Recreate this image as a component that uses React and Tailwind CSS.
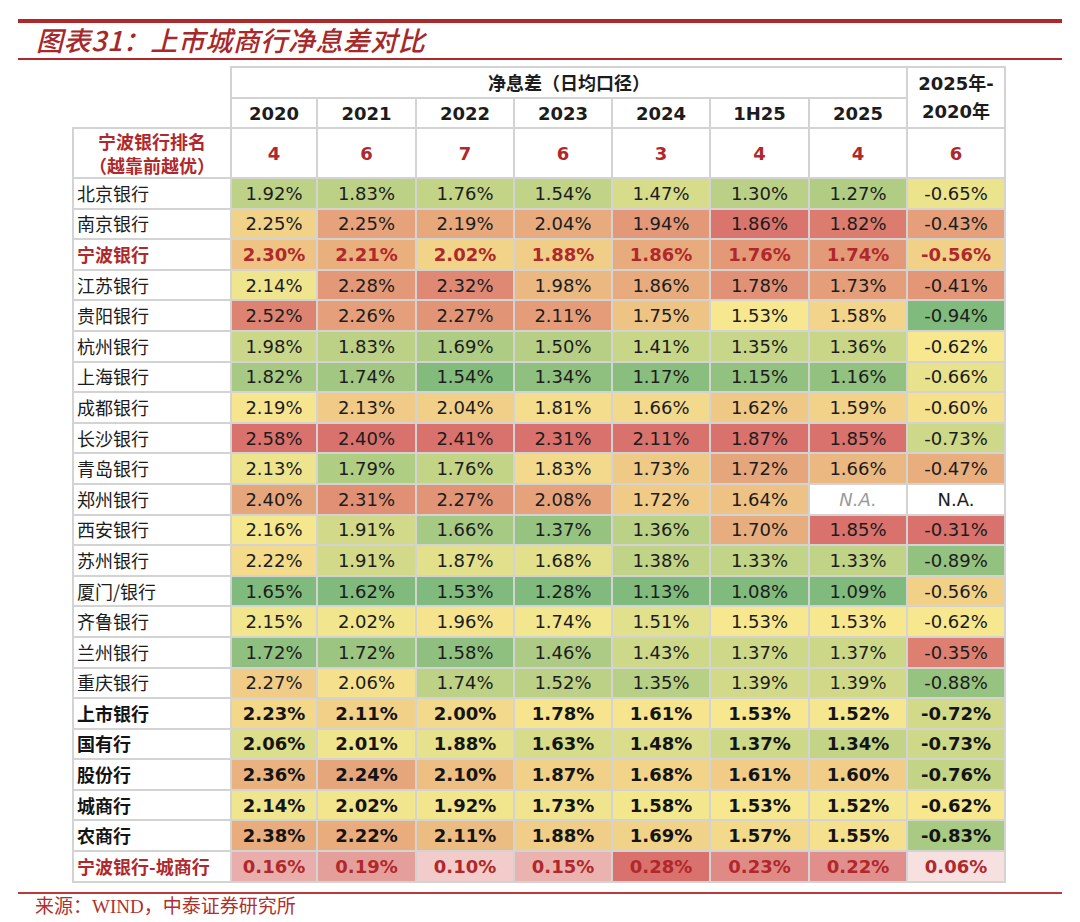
import React from "react";

const G = [128, 186, 125];
const Y = [247, 232, 143];
const R = [217, 113, 108];

const banks = [
  ["北京银行", [1.92, 1.83, 1.76, 1.54, 1.47, 1.3, 1.27, -0.65]],
  ["南京银行", [2.25, 2.25, 2.19, 2.04, 1.94, 1.86, 1.82, -0.43]],
  ["宁波银行", [2.3, 2.21, 2.02, 1.88, 1.86, 1.76, 1.74, -0.56], "nb"],
  ["江苏银行", [2.14, 2.28, 2.32, 1.98, 1.86, 1.78, 1.73, -0.41]],
  ["贵阳银行", [2.52, 2.26, 2.27, 2.11, 1.75, 1.53, 1.58, -0.94]],
  ["杭州银行", [1.98, 1.83, 1.69, 1.5, 1.41, 1.35, 1.36, -0.62]],
  ["上海银行", [1.82, 1.74, 1.54, 1.34, 1.17, 1.15, 1.16, -0.66]],
  ["成都银行", [2.19, 2.13, 2.04, 1.81, 1.66, 1.62, 1.59, -0.6]],
  ["长沙银行", [2.58, 2.4, 2.41, 2.31, 2.11, 1.87, 1.85, -0.73]],
  ["青岛银行", [2.13, 1.79, 1.76, 1.83, 1.73, 1.72, 1.66, -0.47]],
  ["郑州银行", [2.4, 2.31, 2.27, 2.08, 1.72, 1.64, null, null]],
  ["西安银行", [2.16, 1.91, 1.66, 1.37, 1.36, 1.7, 1.85, -0.31]],
  ["苏州银行", [2.22, 1.91, 1.87, 1.68, 1.38, 1.33, 1.33, -0.89]],
  ["厦门/银行", [1.65, 1.62, 1.53, 1.28, 1.13, 1.08, 1.09, -0.56]],
  ["齐鲁银行", [2.15, 2.02, 1.96, 1.74, 1.51, 1.53, 1.53, -0.62]],
  ["兰州银行", [1.72, 1.72, 1.58, 1.46, 1.43, 1.37, 1.37, -0.35]],
  ["重庆银行", [2.27, 2.06, 1.74, 1.52, 1.35, 1.39, 1.39, -0.88]],
  ["上市银行", [2.23, 2.11, 2.0, 1.78, 1.61, 1.53, 1.52, -0.72], "agg"],
  ["国有行", [2.06, 2.01, 1.88, 1.63, 1.48, 1.37, 1.34, -0.73], "agg"],
  ["股份行", [2.36, 2.24, 2.1, 1.87, 1.68, 1.61, 1.6, -0.76], "agg"],
  ["城商行", [2.14, 2.02, 1.92, 1.73, 1.58, 1.53, 1.52, -0.62], "agg"],
  ["农商行", [2.38, 2.22, 2.11, 1.88, 1.69, 1.57, 1.55, -0.83], "agg"],
];

const diffRow = [0.16, 0.19, 0.1, 0.15, 0.28, 0.23, 0.22, 0.06];
const years = ["2020", "2021", "2022", "2023", "2024", "1H25", "2025"];
const ranks = [4, 6, 7, 6, 3, 4, 4, 6];

function median(arr) {
  const s = [...arr].sort((a, b) => a - b);
  const n = s.length;
  return n % 2 ? s[(n - 1) / 2] : (s[n / 2 - 1] + s[n / 2]) / 2;
}

const mix = (a, b, t) =>
  `rgb(${a.map((v, i) => Math.round(v + (b[i] - v) * t)).join(",")})`;

const stats = Array.from({ length: 8 }, (_, c) => {
  const vals = banks.map((b) => b[1][c]).filter((v) => v !== null);
  return { min: Math.min(...vals), max: Math.max(...vals), mid: median(vals) };
});

function colorFor(v, c) {
  if (v === null) return "#ffffff";
  const { min, max, mid } = stats[c];
  if (v >= mid) return mix(Y, R, max === mid ? 0 : (v - mid) / (max - mid));
  return mix(Y, G, mid === min ? 0 : (mid - v) / (mid - min));
}

const diffColor = (v) => mix([255, 255, 255], R, v / 0.28);

const fmt = (v) => `${v.toFixed(2)}%`;

const bd = "border-2 border-[#d3d3d3]";

export default function App() {
  return (
    <div className="w-[1080px] h-[922px] bg-white overflow-hidden font-['DejaVu_Sans','Noto_Sans_CJK_SC',sans-serif]">
      <div className="pt-[19px] px-[18px]">
        <div className="h-[4px] bg-[#b0272a]" />
        <div className="h-[35px] pl-[18px] flex items-center text-[27px] italic font-medium text-[#a8282a] font-['Noto_Sans_CJK_SC',sans-serif] tracking-[0.5px]">
          图表31：上市城商行净息差对比
        </div>
        <div className="h-[2px] bg-[#b0272a]" />
      </div>

      <div className="pl-[72px] pt-[6px]">
        <table className="border-collapse table-fixed w-[932px] text-[18px] text-[#1c1c1c]">
          <colgroup>
            <col className="w-[158px]" />
            <col className="w-[86px]" />
            <col className="w-[99px]" />
            <col className="w-[98px]" />
            <col className="w-[98px]" />
            <col className="w-[98px]" />
            <col className="w-[99px]" />
            <col className="w-[98px]" />
            <col className="w-[98px]" />
          </colgroup>
          <thead>
            <tr className="h-[31px]">
              <th rowSpan={2} className="border-0 p-0" />
              <th colSpan={7} className={`${bd} p-0 font-bold text-center font-['Noto_Sans_CJK_SC',sans-serif]`}>
                净息差（日均口径）
              </th>
              <th rowSpan={2} className={`${bd} p-0 font-bold text-center leading-[28px]`}>
                2025年-
                <br />
                2020年
              </th>
            </tr>
            <tr className="h-[30px]">
              {years.map((y) => (
                <th key={y} className={`${bd} p-0 font-bold text-center`}>
                  {y}
                </th>
              ))}
            </tr>
          </thead>
          <tbody>
            <tr className="h-[48.5px]">
              <td className={`${bd} p-0 text-center font-bold text-[#b0282b] leading-[24px] font-['Noto_Sans_CJK_SC',sans-serif]`}>
                宁波银行排名
                <br />
                （越靠前越优）
              </td>
              {ranks.map((r, i) => (
                <td key={i} className={`${bd} p-0 text-center font-bold text-[#b0282b]`}>
                  {r}
                </td>
              ))}
            </tr>
            {banks.map(([name, vals, kind]) => {
              const isNb = kind === "nb";
              const isAgg = kind === "agg";
              const textCls = isNb
                ? "font-bold text-[#b0282b]"
                : isAgg
                ? "font-bold text-[#141414]"
                : "";
              return (
                <tr key={name} className="h-[30.6px]">
                  <td className={`${bd} p-0 pl-[3px] text-left font-['Noto_Sans_CJK_SC',sans-serif] ${textCls}`}>
                    {name}
                  </td>
                  {vals.map((v, c) => (
                    <td
                      key={c}
                      className={`${bd} p-0 text-center ${textCls}`}
                      style={{ backgroundColor: colorFor(v, c) }}
                    >
                      {v === null ? (
                        c === 6 ? (
                          <span className="italic text-[#9a9a9a]">N.A.</span>
                        ) : (
                          <span>N.A.</span>
                        )
                      ) : (
                        fmt(v)
                      )}
                    </td>
                  ))}
                </tr>
              );
            })}
            <tr className="h-[30.6px]">
              <td className={`${bd} p-0 pl-[3px] text-left font-bold text-[#b0282b] font-['Noto_Sans_CJK_SC',sans-serif]`}>
                宁波银行-城商行
              </td>
              {diffRow.map((v, c) => (
                <td
                  key={c}
                  className={`${bd} p-0 text-center font-bold text-[#b0282b]`}
                  style={{ backgroundColor: diffColor(v) }}
                >
                  {fmt(v)}
                </td>
              ))}
            </tr>
          </tbody>
        </table>
      </div>

      <div className="px-[18px] pt-[9px]">
        <div className="h-[2px] bg-[#b93a38]" />
        <div className="pl-[17px] pt-[1px] text-[19px] leading-[24px] text-[#b0302c] font-['Liberation_Serif','Noto_Sans_CJK_SC',serif]">
          来源：WIND，中泰证券研究所
        </div>
      </div>
    </div>
  );
}
